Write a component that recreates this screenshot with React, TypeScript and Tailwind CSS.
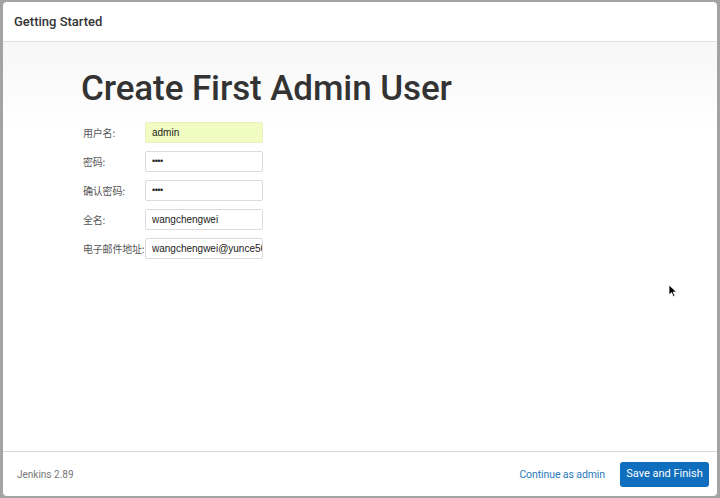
import React from "react";

const rows: { label: string; value: string; type: string; hl?: boolean }[] = [
  { label: "用户名:", value: "admin", type: "text", hl: true },
  { label: "密码:", value: "••••", type: "pw" },
  { label: "确认密码:", value: "••••", type: "pw" },
  { label: "全名:", value: "wangchengwei", type: "text" },
  { label: "电子邮件地址:", value: "wangchengwei@yunce56", type: "text" },
];

export default function App() {
  return (
    <div className="w-[720px] h-[498px] bg-[#a3a3a3] pt-[2px] pl-[3px] pr-[3px] pb-[2px] overflow-hidden relative" style={{ fontFamily: "Roboto, 'Noto Sans CJK SC', sans-serif" }}>
      <div className="w-full h-full bg-white rounded-[4px] flex flex-col overflow-hidden">
        <div className="h-[40px] shrink-0 border-b border-[#e2e2e2] flex items-center px-[11px] text-[13px] font-medium text-[#333]">
          Getting Started
        </div>
        <div className="flex-1 bg-gradient-to-b from-[#f7f7f7] to-white to-[22%] pl-[78px] pt-[25px]">
          <h1 className="text-[35px] leading-[43px] font-medium text-[#333] tracking-[-0.1px]">Create First Admin User</h1>
          <div className="mt-[12px] flex flex-col gap-[8px]">
            {rows.map((r) => (
              <div key={r.label} className="flex items-center h-[21px]">
                <div className="w-[64px] pl-[2px] text-[10px] text-[#555] whitespace-nowrap tracking-[-0.2px]" style={{ fontFamily: "'Noto Sans CJK SC', sans-serif" }}>{r.label}</div>
                <div
                  className={`w-[118px] h-[21px] rounded-[2px] border flex items-center pl-[6px] overflow-hidden whitespace-nowrap text-[10px] text-[#222] ${r.hl ? "bg-[#f1fcc3] border-[#e6efbd]" : "bg-white border-[#dcdcdc]"}`}
                  style={{ fontFamily: "'Liberation Sans', Arial, sans-serif" }}
                >
                  {r.type === "pw" ? <span className="text-[9px] tracking-[-0.5px]">{r.value}</span> : r.value}
                </div>
              </div>
            ))}
          </div>
        </div>
        <div className="h-[45px] shrink-0 border-t border-[#d9d9d9] flex items-center pl-[14px] pr-[8px] pt-[1px]">
          <span className="text-[10px] text-[#777]">Jenkins 2.89</span>
          <span className="ml-auto text-[10.5px] text-[#2a7ab8] tracking-[-0.1px]">Continue as admin</span>
          <button className="ml-[15px] w-[89px] h-[25px] rounded-[3px] bg-[#0f6ebd] text-white text-[11px]">Save and Finish</button>
        </div>
      </div>
      <svg className="absolute left-[668px] top-[284px]" width="10" height="14" viewBox="0 0 10 14">
        <path d="M1 1 L1 11 L3.5 8.6 L5.3 12.6 L6.9 11.9 L5.2 8 L8.6 8 Z" fill="#000" stroke="#fff" strokeWidth="0.8" />
      </svg>
    </div>
  );
}
